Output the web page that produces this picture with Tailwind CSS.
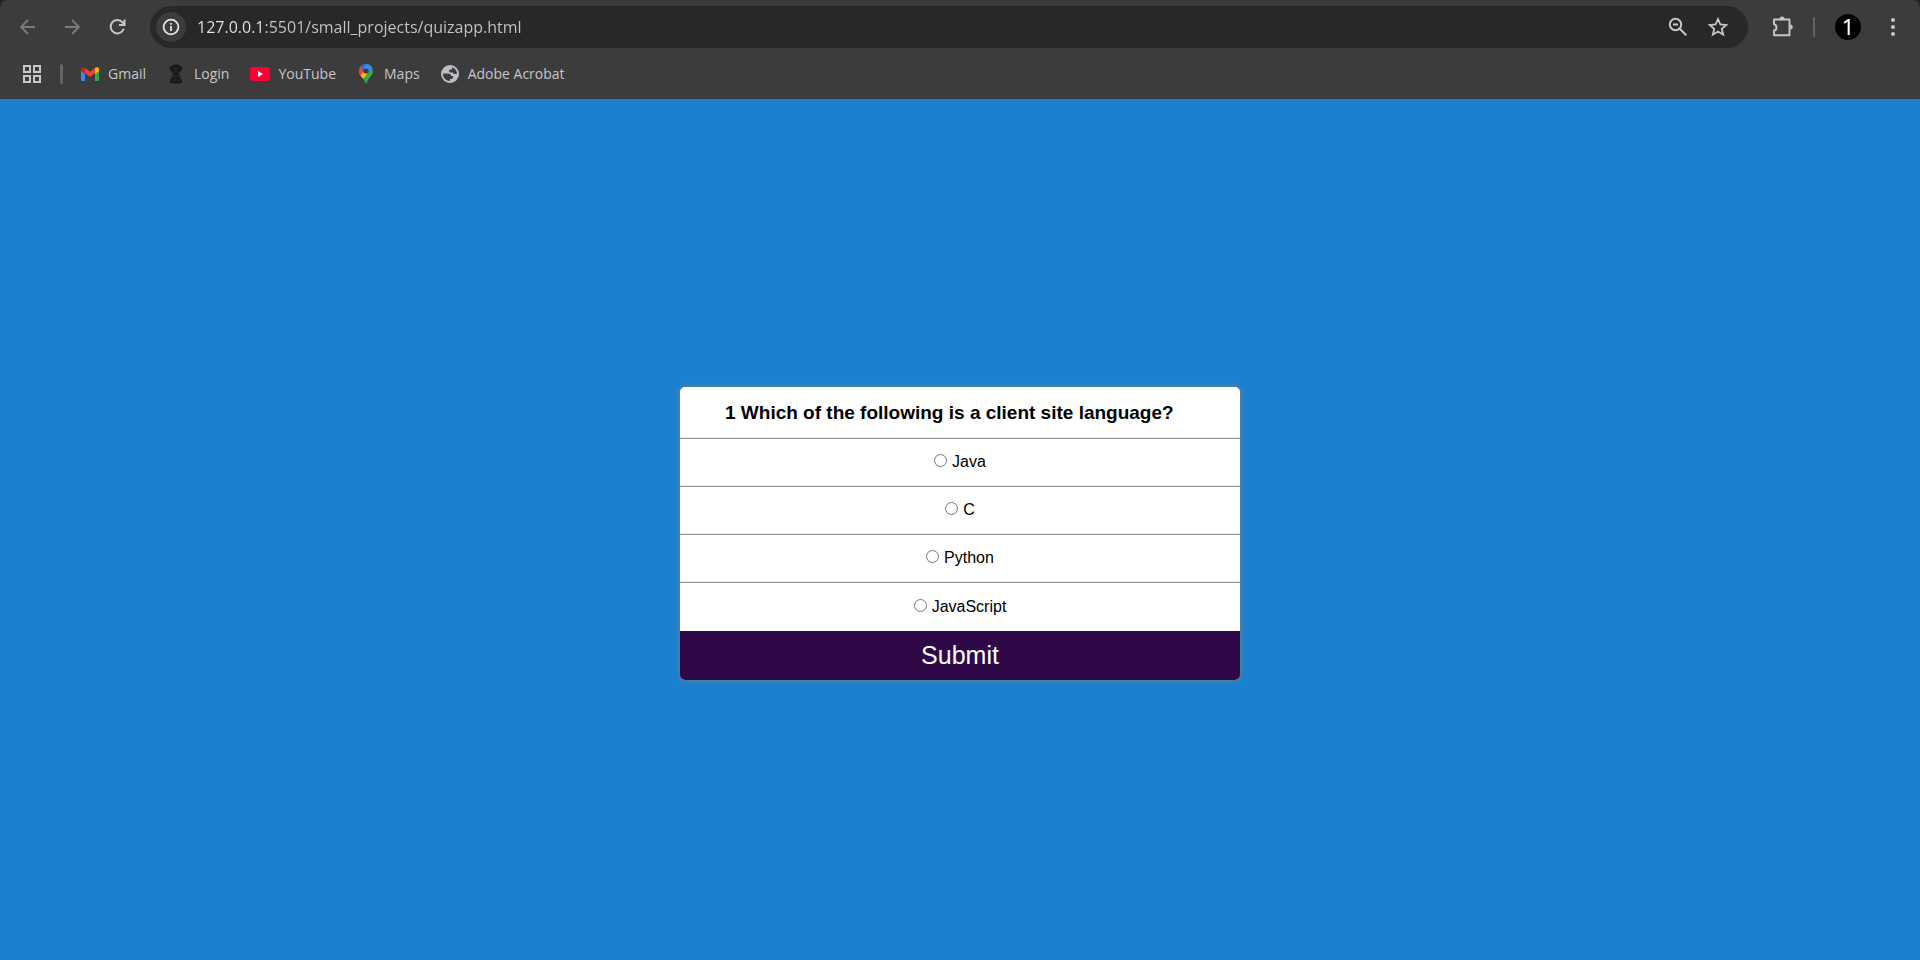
<!DOCTYPE html>
<html lang="en">
<head>
<meta charset="utf-8">
<meta name="viewport" content="width=device-width, initial-scale=1">
<title>Quiz App</title>
<script src="https://cdn.jsdelivr.net/npm/@tailwindcss/browser@4"></script>
</head>
<body class="flex min-h-screen flex-col bg-[#1a80d0] font-['Liberation_Sans',sans-serif] text-black">
  <header class="bg-[#202422]">
    <div class="h-[99px] rounded-t-lg bg-[#3c3c3c] pt-[6px] font-['Open_Sans',sans-serif] text-[#c7c7c7]">
      <div class="flex h-[42px] items-center">
        <nav class="flex w-[150px] shrink-0 items-center gap-[25px] pl-[18px]" aria-label="Navigation">
          <button type="button" aria-label="Back" class="text-[#7b7b7b]">
            <svg class="size-5" viewBox="0 0 20 20" fill="none" stroke="currentColor" stroke-width="1.8"><path d="M17 10H3.5M10 3L3 10l7 7"/></svg>
          </button>
          <button type="button" aria-label="Forward" class="text-[#7b7b7b]">
            <svg class="size-5" viewBox="0 0 20 20" fill="none" stroke="currentColor" stroke-width="1.8"><path d="M2 10h13.500M9 3l7 7-7 7"/></svg>
          </button>
          <button type="button" aria-label="Reload">
            <svg class="size-5" viewBox="0 0 20 20" fill="none" stroke="currentColor" stroke-width="2"><path d="M15.700 11.800A6.700 6.700 0 1 1 14.300 5.200L16 7.200M16.500 2.500V8H11"/></svg>
          </button>
        </nav>
        <div class="flex h-[42px] min-w-0 flex-1 items-center rounded-full bg-[#282828] pr-5 pl-[6px]">
          <button type="button" aria-label="Site information" class="flex size-[30px] shrink-0 items-center justify-center rounded-full bg-[#3c3c3c] text-[#e3e3e3]">
            <svg class="size-[18px]" viewBox="0 0 18 18" fill="none" stroke="currentColor" stroke-width="1.8"><circle cx="9" cy="9" r="7.400"/><path d="M9 8v5M9 5v1.800"/></svg>
          </button>
          <input type="text" aria-label="Address" value="127.0.0.1:5501/small_projects/quizapp.html" class="ml-[11px] h-full min-w-0 flex-1 bg-[linear-gradient(90deg,#e8e8e8_69px,#c7c7c7_69px)] bg-clip-text text-[16px] text-transparent outline-none">
          <button type="button" aria-label="Zoom">
            <svg class="size-5" viewBox="0 0 20 20" fill="none" stroke="currentColor" stroke-width="2"><circle cx="7.500" cy="7.500" r="5.700"/><path d="M5 7.500h5M11.500 11.500l6.800 6.800"/></svg>
          </button>
          <button type="button" aria-label="Bookmark this page" class="ml-5">
            <svg class="size-5" viewBox="0 0 20 20" fill="none" stroke="currentColor" stroke-width="1.800"><path d="M10 2l2.400 5.500 6 .5-4.600 3.900 1.400 5.800-5.200-3.100-5.200 3.100 1.400-5.800L1.600 8l6-.5z"/></svg>
          </button>
        </div>
        <div class="flex shrink-0 items-center pr-[17px] pl-[24px]">
          <button type="button" aria-label="Extensions">
            <svg class="size-[22px]" viewBox="0 0 22 22"><path d="M2 3.500h15.500v15.700H2v-4.700c3.200-.3 3.400-5.900 0-6.300z" fill="none" stroke="currentColor" stroke-width="1.900" stroke-linejoin="round"/><path d="M7.500 3a2.500 2.500 0 0 1 5 0zM18.200 8.500a2.500 2.500 0 0 1 0 5z" fill="currentColor"/></svg>
          </button>
          <span class="ml-[19px] h-5 w-[2px] rounded bg-[#646464]"></span>
          <button type="button" aria-label="Profile" class="ml-5 flex size-[26px] items-center justify-center rounded-full bg-black pb-[2px] font-['Noto_Sans',sans-serif] text-[22px] leading-none text-white">1</button>
          <button type="button" aria-label="Menu" class="ml-[22px]">
            <svg class="size-5" viewBox="0 0 20 20" fill="currentColor"><circle cx="10" cy="3" r="2"/><circle cx="10" cy="10" r="2"/><circle cx="10" cy="17" r="2"/></svg>
          </button>
        </div>
      </div>
      <nav class="flex h-[51px] items-center pl-[23px] text-[14px]" aria-label="Bookmarks">
        <button type="button" aria-label="Apps">
          <svg class="size-[18px]" viewBox="0 0 18 18" fill="none" stroke="currentColor" stroke-width="2"><path d="M1 1h6v6H1zM11 1h6v6h-6zM1 11h6v6H1zM11 11h6v6h-6z"/></svg>
        </button>
        <span class="mr-[18px] ml-[19px] h-5 w-[3px] rounded bg-[#646464]"></span>
        <div class="flex items-center gap-[21px] leading-5">
          <a href="#" class="flex items-center gap-[9px]">
            <svg class="size-[18px]" viewBox="0 0 18 18"><path fill="#4285f4" d="M0 5l4 3v8H1.200A1.200 1.200 0 0 1 0 14.800z"/><path fill="#34a853" d="M14 8l4-3v9.800a1.200 1.200 0 0 1-1.200 1.200H14z"/><path fill="#c5221f" d="M0 6V4.300C0 2.200 2.200 1.600 4 2.900V9z"/><path fill="#fbbc04" d="M14 9V2.900C15.800 1.600 18 2.200 18 4.300V6z"/><path fill="#ea4335" d="M4 2.900l5 3.800 5-3.800V8l-5 3.900L4 8z"/></svg>Gmail</a>
          <a href="#" class="flex items-center gap-[9px]">
            <svg class="h-5 w-[18px]" viewBox="0 0 18 20" fill="#181818"><path d="M6 1.500Q9-.8 12 1.500q3-.3 3.500 2.500-.2 3-2.500 3.500l-1 4.500H6L5 7.500Q2.700 7 2.500 4 3 1.200 6 1.500zM4 12h10v2H4z"/><path d="M7 13h4l1 1.500 3 .5v3.500l-2 1H5l-2-1V15l3-.5z"/><path d="M7 4l2 1 2-1M9 5v3M6 7l1 3M12 7l-1 3M4.500 12.500h9M5 17h2M11 17h2M8.500 15v2" fill="none" stroke="#343434" stroke-width=".8"/></svg>Login</a>
          <a href="#" class="flex items-center gap-2">
            <svg class="h-[14px] w-5" viewBox="0 0 20 14"><rect width="20" height="14" rx="3.500" fill="#ff0033"/><path fill="#fff" d="M8 4l5 3-5 3z"/></svg>YouTube</a>
          <a href="#" class="flex items-center gap-[9px]">
            <svg class="h-5 w-[18px]" viewBox="0 0 18 20"><defs><clipPath id="pin"><path d="M9 0a7 7 0 0 1 7 7c0 3-1.600 4.500-3.200 6.500C11 15.700 10.200 17 9.800 18.800 9.600 19.800 8.400 19.800 8.200 18.800 7.800 17 7 15.700 5.200 13.500 3.600 11.500 2 10 2 7a7 7 0 0 1 7-7z"/></clipPath></defs><g clip-path="url(#pin)"><path fill="#34a853" d="M0 0h18v20H0z"/><path fill="#fbbc04" d="M0 13.500L7 5l4 4-6.500 8z"/><path fill="#ea4335" d="M0 0h4l4.500 6L2 13H0z"/><path fill="#1a73e8" d="M3.500 2L6 0h5L7 7.500z"/><path fill="#4285f4" d="M6.500 0H14l2 3.500-5 5-4.500-4L10 0z"/></g><circle cx="9" cy="7" r="2.600" fill="#3c3c3c"/></svg>Maps</a>
          <a href="#" class="flex items-center gap-[9px]">
            <svg class="size-[18px]" viewBox="0 0 18 18"><circle cx="9" cy="9" r="9" fill="#bdc1c6"/><path fill="#3c3c3c" d="M11 2.300c3 1 5 3.600 5 6.700h-2.500c-1 0-1.500-.6-1.500-1.500H9.500c-1 0-1.500-.7-1.500-1.500s.6-1.500 1.500-1.500H11zM2 8.500h5c2 0 3 .9 3 2.500h2v1.500c0 .9-.6 1.500-1.500 1.500H9v2C5 16 2 12.800 2 9z"/></svg>Adobe Acrobat</a>
        </div>
      </nav>
    </div>
  </header>
  <main class="flex flex-1 items-center justify-center pt-2">
    <form class="w-full max-w-[560px] overflow-hidden rounded-[5px] bg-white shadow-[0_0_6px_0px_#808080]">
      <fieldset>
        <legend class="w-full border-b border-[#e8e8e8] pt-[15px] pb-[14px] pl-[45px] text-[19px] leading-[21px] font-bold">1 Which of the following is a client site language?</legend>
        <div class="text-center text-[16px]">
          <label class="flex h-12 items-center justify-center gap-[5px] border-t border-b border-t-[#949494] border-b-[#e8e8e8]"><input type="radio" name="answer" class="mb-[3px] size-[13px]">Java</label>
          <label class="flex h-12 items-center justify-center gap-[5px] border-t border-b border-t-[#949494] border-b-[#e8e8e8]"><input type="radio" name="answer" class="mb-[3px] size-[13px]">C</label>
          <label class="flex h-12 items-center justify-center gap-[5px] border-t border-b border-t-[#949494] border-b-[#e8e8e8]"><input type="radio" name="answer" class="mb-[3px] size-[13px]">Python</label>
          <label class="flex h-[49px] items-center justify-center gap-[5px] border-t border-[#949494]"><input type="radio" name="answer" class="mb-[3px] size-[13px]">JavaScript</label>
        </div>
      </fieldset>
      <button type="button" class="block h-[49px] w-full bg-[#2f0848] pb-[2px] text-[25px] leading-[30px] text-white">Submit</button>
    </form>
  </main>
</body>
</html>
